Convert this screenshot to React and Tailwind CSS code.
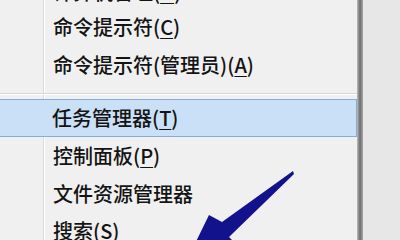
import React from "react";

const font = { fontFamily: '"Noto Sans CJK SC", "Noto Sans", sans-serif' };

function Label({ text, k }) {
  if (!k) return <span>{text}</span>;
  return (
    <span>
      {text}(<span className="underline decoration-1 underline-offset-[3px]">{k}</span>)
    </span>
  );
}

function Row({ text, k, h, active }) {
  if (active) {
    return (
      <div className={`flex items-center ${h} -ml-[2px] border border-[#86acd8] bg-[#cae0f6]`}>
        <div className="w-[53px] shrink-0" />
        <Label text={text} k={k} />
      </div>
    );
  }
  return (
    <div className={`flex items-center ${h}`}>
      <div className="w-[44px] h-full shrink-0 border-r border-[#dadada]" />
      <div className="w-[1px] h-full bg-white shrink-0" />
      <div className="w-[8px] shrink-0" />
      <Label text={text} k={k} />
    </div>
  );
}

export default function App() {
  return (
    <div className="relative w-[400px] h-[240px] overflow-hidden flex bg-[#e8e8e8]" style={font}>
      <div className="w-[357px] shrink-0 bg-[#f0f0f0] overflow-hidden">
        <div className="-mt-[30px] text-[20px] font-medium text-[#141414] leading-none flex flex-col">
          <div className="flex items-center h-[38px] pt-[6px]">
            <div className="w-[44px] h-full shrink-0 border-r border-[#dadada]" />
            <div className="w-[1px] h-full bg-white shrink-0" />
            <div className="w-[8px] shrink-0" />
            <Label text="计算机管理" k="G" />
          </div>
          <Row text="命令提示符" k="C" h="h-[38px]" />
          <Row text="命令提示符(管理员)" k="A" h="h-[38px]" />
          <div className="h-[15px] flex flex-col">
            <div className="flex h-[9px]">
              <div className="w-[44px] border-r border-[#dadada]" />
              <div className="w-[1px] bg-white" />
            </div>
            <div className="h-[1px] bg-[#d6d6d6]" />
            <div className="h-[1px] bg-white" />
            <div className="flex flex-1">
              <div className="w-[44px] border-r border-[#dadada]" />
              <div className="w-[1px] bg-white" />
            </div>
          </div>
          <Row text="任务管理器" k="T" h="h-[38px]" active />
          <Row text="控制面板" k="P" h="h-[38px]" />
          <Row text="文件资源管理器" h="h-[37px]" />
          <Row text="搜索" k="S" h="h-[37px]" />
        </div>
      </div>
      <div className="w-[6px] shrink-0 bg-gradient-to-r from-[#bdbdbd] via-[#6c6c6c] to-[#a9a9a9]" />
      <div className="flex-1 bg-[#e7e7e7]" />
      <svg className="absolute left-0 top-0" width="400" height="240" viewBox="0 0 400 240">
        <polygon
          points="293,171 222,222 209,215 186,262 242,250 229,237 294,174"
          fill="#12128c"
        />
      </svg>
    </div>
  );
}
